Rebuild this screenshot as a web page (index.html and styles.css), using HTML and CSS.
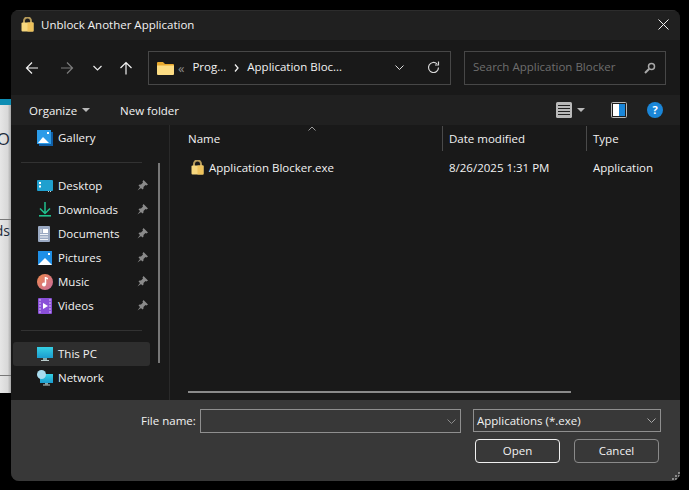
FILE: index.html
```html
<!DOCTYPE html>
<html>
<head>
	<meta charset="utf-8">
	<title>Unblock Another Application</title>
	<link rel="stylesheet" href="styles.css">
</head>
<body>
	<div class="backdrop">
		<span class="peekO">O</span>
		<span class="peekDs">ds</span>
		<i class="peekLine one"></i>
		<i class="peekLine two"></i>
	</div>

	<div class="dialog">
		<div class="titlebar">
			<svg class="lock" width="13" height="15" viewBox="0 0 13 15"><path d="M3 6V4a3.500 3.500 0 0 1 7 0V6" fill="none" stroke="#b59a5a" stroke-width="2"/><rect x="0.500" y="5.500" width="12" height="9" rx="1" fill="#f6d77e"/><rect x="6.500" y="5.500" width="6" height="9" fill="#eec25c"/></svg>
			<span class="title">Unblock Another Application</span>
			<svg class="close" width="11" height="11" viewBox="0 0 11 11"><path d="M.5.500l10 10M10.500.500l-10 10" stroke="#f0f0f0" fill="none"/></svg>
		</div>

		<div class="navbar">
			<svg class="navIcon back" width="14" height="14" viewBox="0 0 14 14"><path d="M13 7H1.500M7 1.500L1.500 7 7 12.500" fill="none" stroke="#f2f2f2" stroke-width="1.200"/></svg>
			<svg class="navIcon forward" width="14" height="14" viewBox="0 0 14 14"><path d="M1 7h11.500M7 1.500L12.500 7 7 12.500" fill="none" stroke="#7c7c7c" stroke-width="1.200"/></svg>
			<svg class="navIcon recent" width="9" height="6" viewBox="0 0 9 6"><path d="M.5 1l4 4 4-4" fill="none" stroke="#e8e8e8" stroke-width="1.200"/></svg>
			<svg class="navIcon up" width="14" height="14" viewBox="0 0 14 14"><path d="M7 13.500V1.500M1.500 7L7 1.500 12.500 7" fill="none" stroke="#f2f2f2" stroke-width="1.200"/></svg>
			<div class="address">
				<svg class="folder" width="17" height="14" viewBox="0 0 17 14"><path d="M0 2a1 1 0 0 1 1-1h5l2 2h8a1 1 0 0 1 1 1v2H0z" fill="#e8a92e"/><path d="M0 4.500h17V13a1 1 0 0 1-1 1H1a1 1 0 0 1-1-1z" fill="#fcdc83"/></svg>
				<span class="crumbMore">&laquo;</span>
				<span class="crumb first">Prog...</span>
				<svg class="crumbSep" width="5" height="8" viewBox="0 0 5 8"><path d="M1 .500L4 4 1 7.500" fill="none" stroke="#eee" stroke-width="1.300"/></svg>
				<span class="crumb">Application Bloc...</span>
				<svg class="addressDrop" width="9" height="5" viewBox="0 0 9 5"><path d="M.5.500l4 4 4-4" fill="none" stroke="#ddd"/></svg>
				<svg class="refresh" width="13" height="13" viewBox="0 0 13 13"><path d="M11.500 6.500a5 5 0 1 1-1.500-3.600" fill="none" stroke="#d8d8d8" stroke-width="1.200"/><path d="M11.500.500v3.500H8" fill="none" stroke="#d8d8d8" stroke-width="1.200"/></svg>
			</div>
			<div class="search">
				<span class="searchText">Search Application Blocker</span>
				<svg class="searchIcon" width="12" height="12" viewBox="0 0 12 12"><circle cx="7.500" cy="4.500" r="3" fill="none" stroke="#a8a8a8" stroke-width="1.500"/><path d="M5.200 6.800L1 11" stroke="#a8a8a8" stroke-width="2" fill="none"/></svg>
			</div>
		</div>

		<div class="toolbar">
			<span class="toolText">Organize</span>
			<i class="caret organizeCaret"></i>
			<span class="toolText newFolder">New folder</span>
			<svg class="viewIcon" width="16" height="16" viewBox="0 0 16 16"><rect width="16" height="16" rx="1.500" fill="#b9b9b9"/><path d="M2 3.500h12M2 6.500h12M2 9.500h12M2 12.500h12" stroke="#222"/></svg>
			<i class="caret viewCaret"></i>
			<svg class="previewIcon" width="16" height="16" viewBox="0 0 16 16"><rect x="0.500" y="0.500" width="15" height="15" rx="1" fill="#1d1d1d" stroke="#b9b9b9"/><rect x="2" y="2" width="6" height="12" fill="#fff"/><rect x="8" y="2" width="6" height="12" fill="#1a86d8"/></svg>
			<span class="help">?</span>
		</div>

		<div class="main">
			<ul class="tree">
				<li class="treeItem">
					<svg class="treeIcon" width="16" height="16" viewBox="0 0 16 16"><rect x="2" y="2" width="14" height="14" fill="#0f5fa8"/><rect width="14" height="14" fill="#2b9be8"/><path d="M1 13l5-6 6 6z" fill="#fff"/><rect x="10" y="2" width="2" height="2" fill="#fff"/></svg>
					<span>Gallery</span>
				</li>
				<li class="treeRule"></li>
				<li class="treeItem">
					<svg class="treeIcon" width="16" height="13" viewBox="0 0 16 13"><rect width="16" height="11" rx="1" fill="#1fa0cf"/><rect x="2" y="2" width="2" height="2" fill="#fff"/><rect x="2" y="5.500" width="2" height="2" fill="#fff"/><rect x="11" y="11" width="1" height="1" fill="#ccc"/><rect x="13" y="11" width="1" height="1" fill="#ccc"/></svg>
					<span>Desktop</span>
					<svg class="pin" width="11" height="11" viewBox="0 0 11 11"><path d="M6.500 0L11 4.500 9.500 5.500 8.500 5 6.500 7 6.500 8.500 5.500 9.500 1.500 5.500 2.500 4.500 4 4.500 6 2.500 5.500 1.500zM3 7L.5 10.500 4 8z" fill="#8a8a8a"/></svg>
				</li>
				<li class="treeItem">
					<svg class="treeIcon" width="16" height="16" viewBox="0 0 16 16"><path d="M8 0v11M3 6.500l5 5 5-5" fill="none" stroke="#20c08e" stroke-width="1.500"/><rect x="2" y="13" width="12" height="1.600" fill="#20c08e"/></svg>
					<span>Downloads</span>
					<svg class="pin" width="11" height="11" viewBox="0 0 11 11"><path d="M6.500 0L11 4.500 9.500 5.500 8.500 5 6.500 7 6.500 8.500 5.500 9.500 1.500 5.500 2.500 4.500 4 4.500 6 2.500 5.500 1.500zM3 7L.5 10.500 4 8z" fill="#8a8a8a"/></svg>
				</li>
				<li class="treeItem">
					<svg class="treeIcon" width="16" height="16" viewBox="0 0 16 16"><rect x="1" width="12" height="16" rx="1" fill="#9aa9c2"/><rect x="6" y="3" width="5" height="4" fill="#fff"/><path d="M3 8.500h8M3 11h8M3 13.500h8M3 4h2M3 6h2" stroke="#eef2f8"/></svg>
					<span>Documents</span>
					<svg class="pin" width="11" height="11" viewBox="0 0 11 11"><path d="M6.500 0L11 4.500 9.500 5.500 8.500 5 6.500 7 6.500 8.500 5.500 9.500 1.500 5.500 2.500 4.500 4 4.500 6 2.500 5.500 1.500zM3 7L.5 10.500 4 8z" fill="#8a8a8a"/></svg>
				</li>
				<li class="treeItem">
					<svg class="treeIcon" width="16" height="14" viewBox="0 0 16 14"><rect x="1" width="14" height="14" fill="#1f8fe6"/><path d="M1 14l7-7 7 7z" fill="#fff"/><rect x="11" y="2" width="2" height="2" fill="#fff"/></svg>
					<span>Pictures</span>
					<svg class="pin" width="11" height="11" viewBox="0 0 11 11"><path d="M6.500 0L11 4.500 9.500 5.500 8.500 5 6.500 7 6.500 8.500 5.500 9.500 1.500 5.500 2.500 4.500 4 4.500 6 2.500 5.500 1.500zM3 7L.5 10.500 4 8z" fill="#8a8a8a"/></svg>
				</li>
				<li class="treeItem">
					<svg class="treeIcon" width="16" height="16" viewBox="0 0 16 16"><defs><linearGradient id="musicFill" x1="0" y1="0" x2="1" y2="1"><stop offset="0" stop-color="#f08a4c"/><stop offset="1" stop-color="#c76a9c"/></linearGradient></defs><circle cx="8" cy="8" r="8" fill="url(#musicFill)"/><path d="M8.500 3v7" stroke="#fff" stroke-width="1.500"/><path d="M8.500 3l2.500 1v1.500l-2.500-1z" fill="#fff"/><circle cx="7" cy="10.500" r="2" fill="#fff"/></svg>
					<span>Music</span>
					<svg class="pin" width="11" height="11" viewBox="0 0 11 11"><path d="M6.500 0L11 4.500 9.500 5.500 8.500 5 6.500 7 6.500 8.500 5.500 9.500 1.500 5.500 2.500 4.500 4 4.500 6 2.500 5.500 1.500zM3 7L.5 10.500 4 8z" fill="#8a8a8a"/></svg>
				</li>
				<li class="treeItem">
					<svg class="treeIcon" width="16" height="16" viewBox="0 0 16 16"><rect x="1" width="14" height="16" rx="1" fill="#8a4fd8"/><path d="M6 5l5 3-5 3z" fill="#fff"/><path d="M2 2h2M2 5h2M2 8h2M2 11h2M2 14h2M12 2h2M12 5h2M12 8h2M12 11h2M12 14h2" stroke="#d9c5f5" stroke-width="1.200"/></svg>
					<span>Videos</span>
					<svg class="pin" width="11" height="11" viewBox="0 0 11 11"><path d="M6.500 0L11 4.500 9.500 5.500 8.500 5 6.500 7 6.500 8.500 5.500 9.500 1.500 5.500 2.500 4.500 4 4.500 6 2.500 5.500 1.500zM3 7L.5 10.500 4 8z" fill="#8a8a8a"/></svg>
				</li>
				<li class="treeRule"></li>
				<li class="treeItem current">
					<svg class="treeIcon" width="16" height="15" viewBox="0 0 16 15"><defs><linearGradient id="pcFill" x1="0" y1="0" x2="0" y2="1"><stop offset="0" stop-color="#35d0e4"/><stop offset="1" stop-color="#1c9ccf"/></linearGradient></defs><rect width="16" height="11" fill="url(#pcFill)"/><rect x="6" y="11" width="4" height="2" fill="#8aa"/><rect x="4" y="13" width="8" height="1" fill="#bcc"/></svg>
					<span>This PC</span>
				</li>
				<li class="treeItem">
					<svg class="treeIcon" width="16" height="16" viewBox="0 0 16 16"><rect x="3" y="4" width="13" height="9" fill="url(#pcFill)"/><rect x="8" y="13" width="3" height="1.500" fill="#8aa"/><rect x="6" y="14.500" width="7" height="1" fill="#bcc"/><circle cx="4.500" cy="4.500" r="4.500" fill="#a8dcef"/></svg>
					<span>Network</span>
				</li>
			</ul>
			<i class="treeScroll"></i>

			<div class="files">
				<svg class="sortMark" width="8" height="5" viewBox="0 0 8 5"><path d="M.5 4.500L4 1l3.500 3.500" fill="none" stroke="#999"/></svg>
				<div class="fileRow fileHead">
					<span class="colName">Name</span>
					<span class="colDate">Date modified</span>
					<span class="colType">Type</span>
				</div>
				<div class="fileRow fileItem">
					<span class="colName">
						<svg class="fileLock" width="13" height="15" viewBox="0 0 13 15"><path d="M3 6V4a3.500 3.500 0 0 1 7 0V6" fill="none" stroke="#b59a5a" stroke-width="2"/><rect x="0.500" y="5.500" width="12" height="9" rx="1" fill="#f6d77e"/><rect x="6.500" y="5.500" width="6" height="9" fill="#eec25c"/></svg>
						Application Blocker.exe
					</span>
					<span class="colDate">8/26/2025 1:31 PM</span>
					<span class="colType">Application</span>
				</div>
				<i class="filesScroll"></i>
			</div>
		</div>

		<div class="footer">
			<div class="footRow">
				<label class="nameLabel">File name:</label>
				<div class="field nameField">
					<svg width="9" height="5" viewBox="0 0 9 5"><path d="M.5.500l4 4 4-4" fill="none" stroke="#8c8c8c"/></svg>
				</div>
				<div class="field typeField">
					<span>Applications (*.exe)</span>
					<svg width="9" height="5" viewBox="0 0 9 5"><path d="M.5.500l4 4 4-4" fill="none" stroke="#a8a8a8"/></svg>
				</div>
			</div>
			<div class="footButtons">
				<button class="btn primary">Open</button>
				<button class="btn">Cancel</button>
			</div>
			<svg class="grip" width="8" height="8" viewBox="0 0 8 8"><path d="M6 0h2v2H6zM3 3h2v2H3zM6 3h2v2H6zM0 6h2v2H0zM3 6h2v2H3zM6 6h2v2H6z" fill="#8a8a8a"/></svg>
		</div>
	</div>
</body>
</html>
```

FILE: styles.css
```css
html, body{
	margin: 0;
	height: 100%;
	overflow: hidden;
	background-color: #000;
}
body{
	font-family: "Open Sans", "Liberation Sans", sans-serif;
	font-size: 11.5px;
	color: #f2f2f2;
}
svg{
	display: block;
	flex: none;
}

/* the app behind the dialog */
.backdrop{
	position: absolute;
	left: 0;
	top: 99px;
	width: 11px;
	height: 294px;
	overflow: hidden;
	border-top: 6px solid #0e8db3;
	box-sizing: border-box;
	background: linear-gradient(to right, #e6e6e6, #d8d8d8 70%, #a6a6a6);
}
.peekO, .peekDs{
	position: absolute;
	right: 1px;
	color: #1c2a3a;
	font-size: 17px;
	line-height: 20px;
}
.peekO{
	top: 24px;
}
.peekDs{
	top: 116px;
	font-size: 14px;
}
.peekLine{
	position: absolute;
	left: 0;
	width: 100%;
	height: 1px;
	background-color: #777;
}
.peekLine.one{
	top: 114px;
}
.peekLine.two{
	top: 270px;
}

.dialog{
	margin: 10px 0 0 11px;
	width: 669px;
	height: 471px;
	border-radius: 8px;
	overflow: hidden;
	display: flex;
	flex-direction: column;
	background-color: #191919;
}

.titlebar{
	height: 30px;
	flex: none;
	box-sizing: border-box;
	border-top: 1px solid #2c2c2c;
	display: flex;
	align-items: center;
	padding: 0 11px 2px 10px;
	background-color: #202020;
}
.title{
	margin-left: 7px;
	flex: 1;
}

.navbar{
	height: 55px;
	flex: none;
	display: flex;
	align-items: center;
	padding-left: 14px;
	background-color: #191919;
}
.forward{
	margin-left: 21px;
}
.recent{
	margin-left: 19px;
}
.up{
	margin-left: 17px;
}
.address{
	margin-left: 15px;
	width: 303px;
	height: 34px;
	box-sizing: border-box;
	border: 1px solid #474747;
	display: flex;
	align-items: center;
	padding-left: 8px;
}
.crumbMore{
	margin-left: 4px;
	color: #8c8c8c;
	font-size: 13px;
}
.crumb{
	margin-left: 7px;
	padding-bottom: 2px;
	white-space: nowrap;
}
.crumb.first{
	margin-left: 8px;
}
.crumbSep{
	margin-left: 8px;
	margin-right: 1px;
}
.addressDrop{
	margin-left: auto;
}
.refresh{
	margin-left: 23px;
	margin-right: 10px;
}
.search{
	margin-left: 13px;
	width: 202px;
	height: 34px;
	box-sizing: border-box;
	border: 1px solid #474747;
	display: flex;
	align-items: center;
	justify-content: space-between;
	padding: 0 9px 0 8px;
}
.searchText{
	color: #6e6e6e;
	padding-bottom: 2px;
	white-space: nowrap;
}

.toolbar{
	height: 30px;
	flex: none;
	display: flex;
	align-items: center;
	padding-left: 18px;
	background-color: #202020;
}
.caret{
	display: block;
	width: 0;
	height: 0;
	border-left: 4px solid transparent;
	border-right: 4px solid transparent;
	border-top: 4px solid #b8b8b8;
}
.organizeCaret{
	margin-left: 5px;
}
.newFolder{
	margin-left: 30px;
}
.viewIcon{
	margin-left: auto;
}
.viewCaret{
	margin-left: 5px;
}
.previewIcon{
	margin-left: 26px;
}
.help{
	margin-left: 20px;
	margin-right: 17px;
	width: 16px;
	height: 16px;
	border-radius: 50%;
	background-color: #1a86d8;
	color: #fff;
	font-size: 11px;
	font-weight: 700;
	line-height: 16px;
	text-align: center;
}

.main{
	flex: 1;
	display: flex;
	position: relative;
	min-height: 0;
}
.tree{
	list-style: none;
	margin: 0;
	padding: 1px 0 0 2px;
	width: 155px;
	flex: none;
	box-sizing: border-box;
}
.treeItem{
	height: 24px;
	width: 137px;
	display: flex;
	align-items: center;
	padding-left: 24px;
	box-sizing: border-box;
	border-radius: 3px;
	position: relative;
}
.treeIcon{
	margin-right: 6px;
}
.treeIcon + span{
	position: absolute;
	left: 45px;
	padding-bottom: 2px;
}
.pin{
	position: absolute;
	left: 124px;
	top: 6px;
}
.treeItem.current{
	background-color: #2e2e2e;
}
.treeRule{
	height: 1px;
	margin: 12px 0 11px 8px;
	width: 121px;
	background-color: #323232;
}
.treeScroll{
	position: absolute;
	left: 147px;
	top: 38px;
	width: 2px;
	height: 200px;
	background-color: #777;
}
.files{
	flex: 1;
	margin-left: 3px;
	border-left: 1px solid #292929;
	position: relative;
	padding-left: 18px;
}
.fileRow{
	display: flex;
	align-items: center;
}
.fileHead{
	height: 25px;
	margin-top: 1px;
}
.fileItem{
	height: 22px;
	margin-top: 5px;
}
.colName{
	width: 254px;
	display: flex;
	align-items: center;
	gap: 5px;
	white-space: nowrap;
}
.fileItem .colName{
	padding-left: 3px;
	width: 251px;
}
.colDate{
	width: 144px;
	white-space: nowrap;
	padding-left: 7px;
	box-sizing: border-box;
}
.colType{
	padding-left: 7px;
	white-space: nowrap;
}
.fileHead .colDate, .fileHead .colType{
	border-left: 1px solid #4a4a4a;
	line-height: 25px;
	padding-left: 6px;
}
.sortMark{
	position: absolute;
	left: 138px;
	top: 1px;
}
.filesScroll{
	position: absolute;
	left: 18px;
	top: 266px;
	width: 383px;
	height: 2px;
	background-color: #8a8a8a;
}

.footer{
	height: 81px;
	flex: none;
	box-sizing: border-box;
	position: relative;
	background-color: #383838;
	padding-top: 9px;
}
.footRow{
	display: flex;
	align-items: flex-start;
	padding-left: 130px;
}
.nameLabel{
	width: 59px;
	line-height: 24px;
	white-space: nowrap;
}
.field{
	box-sizing: border-box;
	border: 1px solid #8f8f8f;
	display: flex;
	align-items: center;
	justify-content: space-between;
}
.nameField{
	width: 261px;
	height: 24px;
	justify-content: flex-end;
	padding-right: 4px;
}
.typeField{
	margin-left: 12px;
	width: 188px;
	height: 23px;
	padding: 0 4px 0 3px;
	white-space: nowrap;
}
.footButtons{
	display: flex;
	gap: 14px;
	margin-top: 6px;
	padding-left: 464px;
}
.btn{
	width: 85px;
	height: 24px;
	padding: 0 0 2px;
	box-sizing: border-box;
	border: 1px solid #8a8a8a;
	border-radius: 4px;
	background-color: #383838;
	color: #f2f2f2;
	font: inherit;
}
.btn.primary{
	border-color: #f0f0f0;
}
.grip{
	position: absolute;
	right: 0;
	bottom: 1px;
}
```
